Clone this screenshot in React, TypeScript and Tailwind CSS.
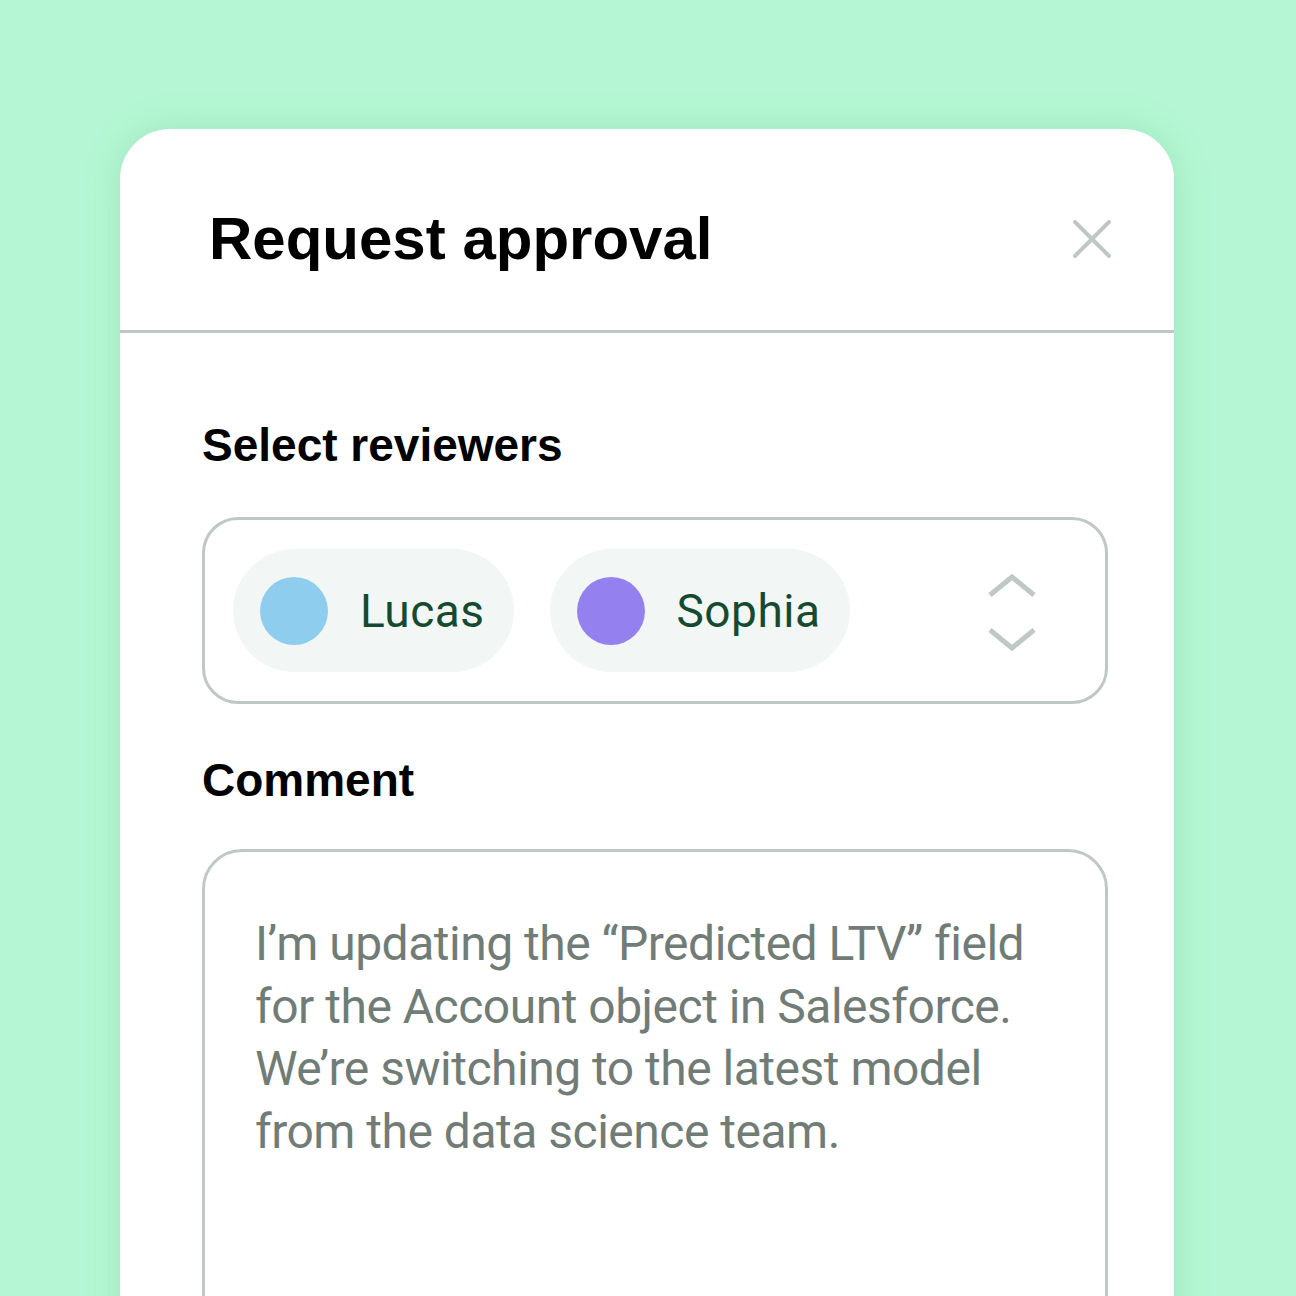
import React from 'react';

const Chip = ({ name, color, pr }: { name: string; color: string; pr: string }) => (
  <div className={`flex items-center h-[123px] rounded-full bg-[#f2f6f4] pl-[27px] ${pr}`}>
    <span className={`w-[68px] h-[68px] rounded-full ${color}`} />
    <span className="ml-[32px] text-[46px] leading-none tracking-[0.5px] text-[#164a30] font-['Roboto',sans-serif]">{name}</span>
  </div>
);

const App: React.FC = () => {
  return (
    <div className="w-[1296px] h-[1296px] bg-[#b5f7d4] overflow-hidden pt-[129px] pl-[120px] font-['Liberation_Sans',Arial,sans-serif]">
      <div className="w-[1054px] h-[1300px] bg-white rounded-t-[50px] shadow-[0_0_40px_rgba(20,120,70,0.15)]">
        {/* header */}
        <div className="h-[204px] flex items-center justify-between pt-[19px] pl-[89px] pr-[63px] border-b-[3px] border-[#c0c8c4]">
          <h2 className="text-[60px] font-bold text-black leading-none">Request approval</h2>
          <svg width="38" height="38" viewBox="0 0 38 38">
            <path d="M2 2 L36 36 M36 2 L2 36" stroke="#c0c8c4" strokeWidth="4" strokeLinecap="round" />
          </svg>
        </div>

        <div className="pl-[82px] pr-[66px] pt-[89px]">
          <div className="text-[46px] font-bold text-black leading-none">Select reviewers</div>

          <div className="mt-[49px] h-[187px] rounded-[36px] border-[3px] border-[#c0c8c4] flex items-center pl-[28px] pr-[68px]">
            <div className="flex items-center gap-[36px] flex-1">
              <Chip name="Lucas" color="bg-[#8ecdee]" pr="pr-[29px]" />
              <Chip name="Sophia" color="bg-[#9580f0]" pr="pr-[30px]" />
            </div>
            <svg width="50" height="88" viewBox="0 0 50 88">
              <path d="M3 28 L25 10 L47 28" fill="none" stroke="#c0c8c4" strokeWidth="5" />
              <path d="M3 63 L25 81 L47 63" fill="none" stroke="#c0c8c4" strokeWidth="5" />
            </svg>
          </div>

          <div className="mt-[53px] text-[46px] font-bold text-black leading-none">Comment</div>

          <div className="mt-[46px] h-[600px] rounded-[40px] border-[3px] border-[#c0c8c4] pl-[50px] pr-[30px] pt-[61px]">
            <p className="text-[48px] leading-[62.5px] tracking-[-0.5px] text-[#717c76] font-['Roboto',sans-serif]">
              I’m updating the “Predicted LTV” field<br />
              for the Account object in Salesforce.<br />
              We’re switching to the latest model<br />
              from the data science team.
            </p>
          </div>
        </div>
      </div>
    </div>
  );
};

export default App;
